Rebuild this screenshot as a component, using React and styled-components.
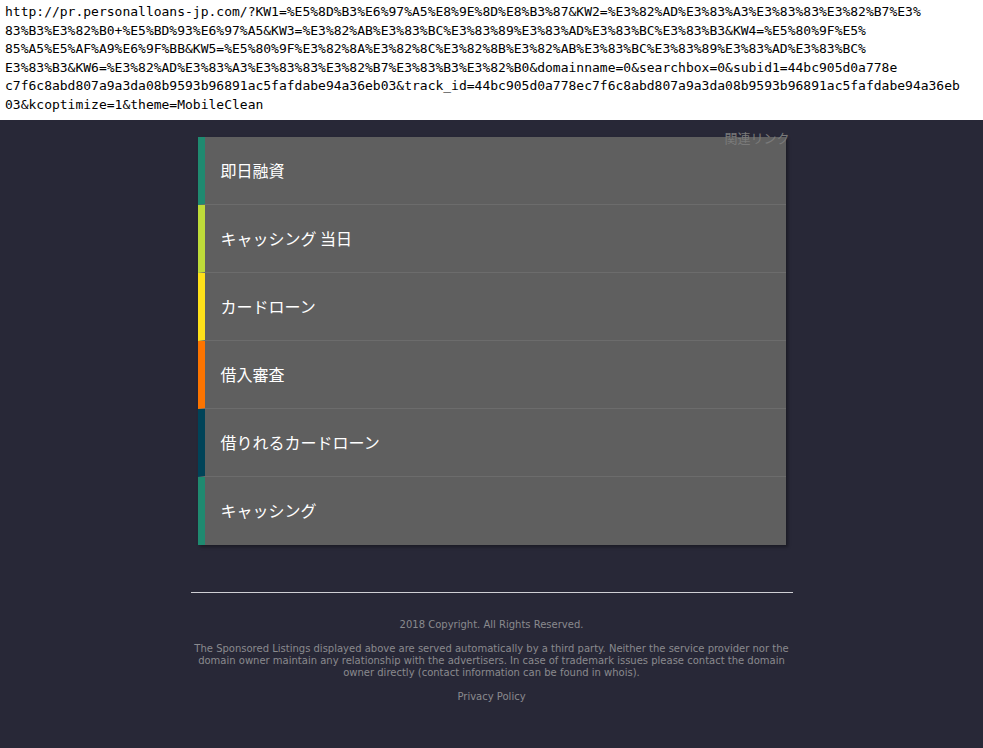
import React from "react";
import styled, { createGlobalStyle } from "styled-components";

const GlobalStyle = createGlobalStyle`
  html, body {
    margin: 0;
    padding: 0;
    background: #282837;
  }
  body {
    font-family: "Noto Sans CJK JP", sans-serif;
  }
`;

const UrlBar = styled.div`
  background: #fff;
  color: #000;
  height: 120px;
  box-sizing: border-box;
  padding: 3px 0 0 5px;
  font-family: "DejaVu Sans Mono", monospace;
  font-size: 13px;
  line-height: 18.5px;
  overflow: hidden;
`;

const UrlLine = styled.div`
  white-space: nowrap;
`;

const Page = styled.div`
  width: 602px;
  margin: 0 auto;
  padding-top: 17px;
  position: relative;
`;

const Label = styled.div`
  position: absolute;
  top: 10px;
  right: 3px;
  font-size: 13px;
  color: #7a7a7a;
  line-height: 16px;
`;

const List = styled.ul`
  list-style: none;
  margin: 0 7px;
  padding: 0;
  box-shadow: 2px 2px 3px rgba(0, 0, 0, 0.35);
`;

const Item = styled.li`
  display: flex;
  align-items: center;
  height: 68px;
  box-sizing: border-box;
  background: #5f5f5f;
  border-left: 7px solid ${(p) => p.$accent};
  border-bottom: 1px solid #6c6c6c;
  padding-left: 16px;
  padding-bottom: 2px;
  color: #fff;
  font-size: 16px;

  &:last-child {
    border-bottom: none;
  }
`;

const Rule = styled.hr`
  border: none;
  border-top: 1px solid #cfcfd4;
  margin: 47px 0 0;
`;

const Footer = styled.div`
  text-align: center;
  color: #8a8a8e;
  font-family: "DejaVu Sans", sans-serif;
  font-size: 10px;
  line-height: 12px;
  padding: 26px 0 0;

  p {
    margin: 0 0 12px;
  }
`;

const urlLines = [
  "http://pr.personalloans-jp.com/?KW1=%E5%8D%B3%E6%97%A5%E8%9E%8D%E8%B3%87&KW2=%E3%82%AD%E3%83%A3%E3%83%83%E3%82%B7%E3%",
  "83%B3%E3%82%B0+%E5%BD%93%E6%97%A5&KW3=%E3%82%AB%E3%83%BC%E3%83%89%E3%83%AD%E3%83%BC%E3%83%B3&KW4=%E5%80%9F%E5%",
  "85%A5%E5%AF%A9%E6%9F%BB&KW5=%E5%80%9F%E3%82%8A%E3%82%8C%E3%82%8B%E3%82%AB%E3%83%BC%E3%83%89%E3%83%AD%E3%83%BC%",
  "E3%83%B3&KW6=%E3%82%AD%E3%83%A3%E3%83%83%E3%82%B7%E3%83%B3%E3%82%B0&domainname=0&searchbox=0&subid1=44bc905d0a778e",
  "c7f6c8abd807a9a3da08b9593b96891ac5fafdabe94a36eb03&track_id=44bc905d0a778ec7f6c8abd807a9a3da08b9593b96891ac5fafdabe94a36eb",
  "03&kcoptimize=1&theme=MobileClean",
];

const links = [
  { text: "即日融資", accent: "#1f8a70" },
  { text: "キャッシング 当日", accent: "#bedb39" },
  { text: "カードローン", accent: "#ffe11a" },
  { text: "借入審査", accent: "#fd7400" },
  { text: "借りれるカードローン", accent: "#004358" },
  { text: "キャッシング", accent: "#1f8a70" },
];

export default function App() {
  return (
    <>
      <GlobalStyle />
      <UrlBar>
        {urlLines.map((line, i) => (
          <UrlLine key={i}>{line}</UrlLine>
        ))}
      </UrlBar>
      <Page>
        <Label>関連リンク</Label>
        <List>
          {links.map((l) => (
            <Item key={l.text} $accent={l.accent}>
              {l.text}
            </Item>
          ))}
        </List>
        <Rule />
        <Footer>
          <p>2018 Copyright. All Rights Reserved.</p>
          <p>
            The Sponsored Listings displayed above are served automatically by a
            third party. Neither the service provider nor the domain owner
            maintain any relationship with the advertisers. In case of trademark
            issues please contact the domain owner directly (contact information
            can be found in whois).
          </p>
          <p>Privacy Policy</p>
        </Footer>
      </Page>
    </>
  );
}
